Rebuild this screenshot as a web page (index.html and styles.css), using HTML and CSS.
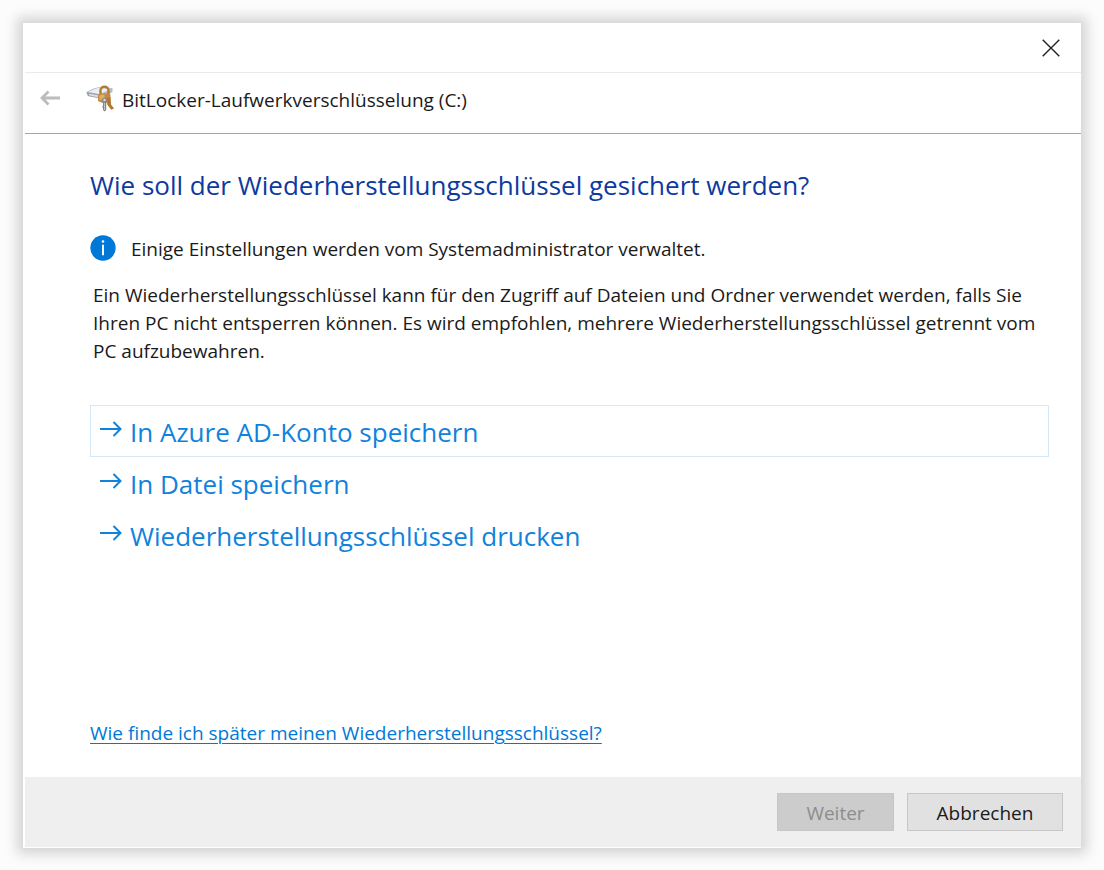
FILE: index.html
```html
<!DOCTYPE html>
<html lang="de">
<head>
  <meta charset="UTF-8">
  <meta name="viewport" content="width=device-width, initial-scale=1.0">
  <title>BitLocker-Laufwerkverschlüsselung (C:)</title>
  <link rel="stylesheet" href="styles.css">
</head>
<body>
  <div class="window">
    <div class="titlebar">
      <button class="close" type="button" aria-label="Schließen">
        <svg width="18" height="18" viewBox="0 0 18 18"><path d="M.7.7l16.6 16.6M17.3.7L.7 17.3" fill="none" stroke="#222" stroke-width="1.4"/></svg>
      </button>
    </div>

    <header class="header">
      <button class="back" type="button" aria-label="Zurück" disabled>
        <svg width="20" height="16" viewBox="0 0 20 16"><path d="M8.5 1.500L2 8l6.500 6.500M2 8h18" fill="none" stroke="#bcbcbc" stroke-width="2.800"/></svg>
      </button>
      <!-- drive with padlock and key -->
      <svg class="app-icon" width="28" height="27" viewBox="0 0 28 27">
        <path d="M.3 7.500Q1 5.500 12 2.200L26.500 3v4L16 13.500 2 11z" fill="#b9bdc2"/>
        <path d="M2 6.800L12 3l13 .8-11 5.400z" fill="#eceef0"/>
        <path d="M.5 7.200l14 2.500v3.800L2 11z" fill="#9a9ea6"/>
        <path d="M3 8.700l10 1.900v1.800L3 10.200z" fill="#d9e0f0"/>
        <path d="M14.500 10V5.500c0-5 8-5 8 0V10" fill="none" stroke="#b07a38" stroke-width="2.400"/>
        <path d="M12 9.500q6.500-2.500 12.500 0v7q-6 3.500-12.500-.5z" fill="#c48a3e"/>
        <path d="M13.500 10.500q3-1.500 5-1v5q-3 .8-5 .2z" fill="#dfae68"/>
        <path d="M21 13l3.300-1 .9 8 3 3.500-3 1.300-4-5.300z" fill="#b37630"/>
        <circle cx="18.500" cy="15.500" r="2.800" fill="#8c8c8c"/>
        <circle cx="18.500" cy="15" r="1.100" fill="#eee"/>
        <path d="M17 17.500h3.200v7.500l-1.500 1.500L17 25v-2l-1-1 1-1z" fill="#858585"/>
        <path d="M18.500 18V25" stroke="#c4c4c4" stroke-width="1"/>
      </svg>
      <span class="app-title">BitLocker-Laufwerkverschlüsselung (C:)</span>
    </header>

    <main class="content">
      <h1>Wie soll der Wiederherstellungsschlüssel gesichert werden?</h1>
      <div class="notice">
        <svg width="26" height="26" viewBox="0 0 26 26">
          <circle cx="13" cy="13" r="12.700" fill="#0078d7"/>
          <circle cx="13" cy="6.500" r="1.300" fill="#fff"/>
          <path d="M13 9.800v10.400" stroke="#fff" stroke-width="2"/>
        </svg>
        <span>Einige Einstellungen werden vom Systemadministrator verwaltet.</span>
      </div>
      <p class="text">Ein Wiederherstellungsschlüssel kann für den Zugriff auf Dateien und Ordner verwendet werden, falls Sie Ihren PC nicht entsperren können. Es wird empfohlen, mehrere Wiederherstellungsschlüssel getrennt vom PC aufzubewahren.</p>

      <div class="options">
        <button class="option selected" type="button">
          <svg width="22" height="18" viewBox="0 0 22 18"><path d="M0 9h20.500M13.500 2L20.500 9l-7 7" fill="none" stroke="#0f83dc" stroke-width="2"/></svg>
          <span>In Azure AD-Konto speichern</span>
        </button>
        <button class="option" type="button">
          <svg width="22" height="18" viewBox="0 0 22 18"><path d="M0 9h20.500M13.500 2L20.500 9l-7 7" fill="none" stroke="#0f83dc" stroke-width="2"/></svg>
          <span>In Datei speichern</span>
        </button>
        <button class="option" type="button">
          <svg width="22" height="18" viewBox="0 0 22 18"><path d="M0 9h20.500M13.500 2L20.500 9l-7 7" fill="none" stroke="#0f83dc" stroke-width="2"/></svg>
          <span>Wiederherstellungsschlüssel drucken</span>
        </button>
      </div>

      <a class="help" href="#">Wie finde ich später meinen Wiederherstellungsschlüssel?</a>
    </main>

    <footer class="footer">
      <button class="btn next" type="button" disabled>Weiter</button>
      <button class="btn cancel" type="button">Abbrechen</button>
    </footer>
  </div>
</body>
</html>
```

FILE: styles.css
```css
* {
  box-sizing: border-box;
}

body {
  margin: 0;
  padding: 22px 22px 21px;
  min-height: 100vh;
  display: flex;
  background: #fcfcfc;
  color: #1a1a1a;
  font-family: "Open Sans", "Noto Sans", sans-serif;
  font-size: 19px;
}

button {
  padding: 0;
  border: none;
  background: none;
  font: inherit;
}

svg {
  display: block;
  flex: none;
}

.window {
  flex: 1;
  min-width: 0;
  display: flex;
  flex-direction: column;
  padding: 0 0 1px 2px;
  border: 1px solid #dcdcdc;
  background: #fff;
  box-shadow: 0 0 12px 5px rgba(0, 0, 0, 0.16);
}

.titlebar {
  height: 50px;
  display: flex;
  align-items: center;
  justify-content: flex-end;
  padding-right: 21px;
  border-bottom: 1px solid #ebebeb;
}

.header {
  height: 61px;
  display: flex;
  align-items: center;
  padding: 0 15px 10px;
  border-bottom: 1px solid #a5a5a5;
}

.app-icon {
  margin: 0 8px 0 26px;
}

.app-title {
  padding-top: 4px;
}

.content {
  flex: 1;
  display: flex;
  flex-direction: column;
  align-items: flex-start;
  padding: 31px 32px 30px 65px;
}

h1 {
  margin: 0;
  color: #0d3a9f;
  font-size: 26px;
  font-weight: 400;
  line-height: 40px;
}

.notice {
  display: flex;
  align-items: center;
  gap: 15px;
  margin-top: 28px;
  line-height: 28px;
}

.notice span {
  padding-top: 2px;
}

.text {
  margin: 18px 0 0;
  padding-left: 3px;
  line-height: 28px;
}

.options {
  align-self: stretch;
  margin-top: 40px;
}

.option {
  width: 100%;
  height: 52px;
  display: flex;
  align-items: center;
  gap: 8px;
  padding: 0 8px 0 9px;
  border: 1px solid transparent;
  color: #0f83dc;
  font-size: 26px;
  text-align: left;
}

.option svg {
  margin-bottom: 4px;
}

.option span {
  padding-top: 2px;
}

.option.selected {
  border-color: #d5e8f8;
}

.help {
  margin-top: auto;
  color: #0078d7;
  line-height: 28px;
  text-decoration-thickness: 1px;
  text-underline-offset: 3px;
}

.footer {
  display: flex;
  justify-content: flex-end;
  gap: 13px;
  padding: 16px 18px 16px 16px;
  background: #efefef;
}

.btn {
  height: 38px;
  padding-top: 2px;
  border: 1px solid #c6c6c6;
}

.next {
  width: 117px;
  background: #ccc;
  color: #8d8d8d;
}

.cancel {
  width: 156px;
  background: #e1e1e1;
  color: #1a1a1a;
}
```
